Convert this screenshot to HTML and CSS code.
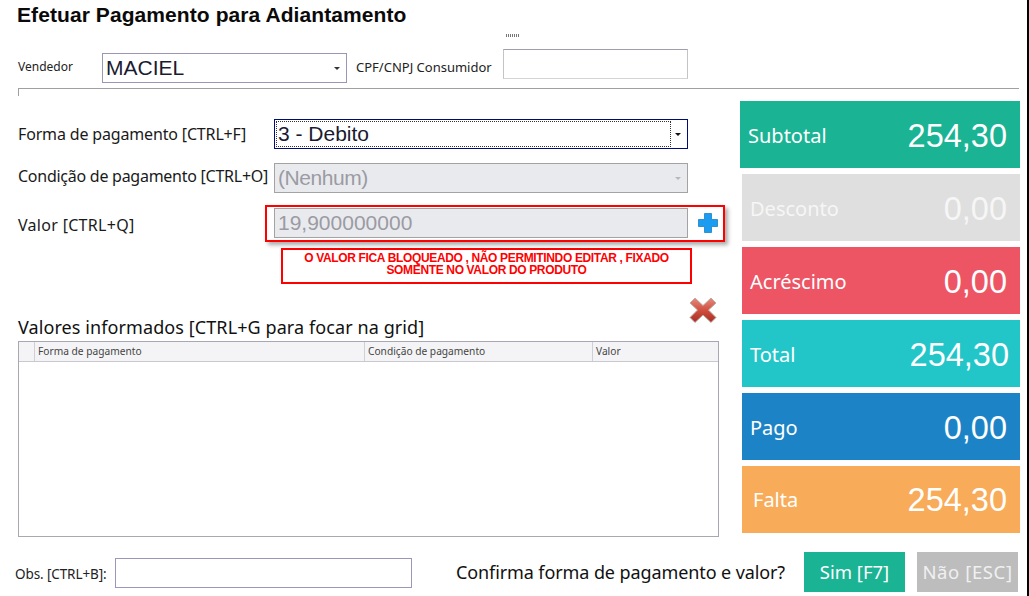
FILE: index.html
```html
<!DOCTYPE html>
<html lang="pt-BR">
<head>
<meta charset="utf-8">
<title>Efetuar Pagamento para Adiantamento</title>
<link rel="stylesheet" href="styles.css">
</head>
<body>
<div class="window">
  <h1 class="title">Efetuar Pagamento para Adiantamento</h1>
  <div class="dots"></div>
  <div class="top-row">
    <span class="small-label vendor-label">Vendedor</span>
    <div class="field vendor"><span class="value-lg">MACIEL</span><span class="caret"></span></div>
    <span class="small-label cpf-label">CPF/CNPJ Consumidor</span>
    <div class="field cpf"></div>
  </div>
  <div class="group-line"></div>
  <div class="main">
    <div class="left">
      <div class="form-row row-forma">
        <span class="label">Forma de pagamento [CTRL+F]</span>
        <div class="field wide focused"><span class="focus-box"><span class="value-lg">3 - Debito</span></span><span class="caret dark"></span></div>
      </div>
      <div class="form-row row-cond">
        <span class="label">Condição de pagamento [CTRL+O]</span>
        <div class="field wide disabled"><span class="value-lg">(Nenhum)</span><span class="caret light"></span></div>
      </div>
      <div class="form-row row-valor">
        <span class="label">Valor [CTRL+Q]</span>
        <div class="highlight">
          <div class="field wide disabled"><span class="value-lg">19,900000000</span></div>
          <svg class="plus" viewBox="0 0 22 22" aria-hidden="true"><path d="M7.500 1.500h7v6h6v7h-6v6h-7v-6h-6v-7h6z" fill="#1c9cf0" stroke="#1481c8" stroke-width=".8" stroke-linejoin="round"/></svg>
        </div>
      </div>
      <div class="note">O VALOR FICA BLOQUEADO , NÃO PERMITINDO EDITAR , FIXADO<br>SOMENTE NO VALOR DO PRODUTO</div>
      <div class="x-row">
        <svg class="remove" viewBox="0 0 28 26" aria-hidden="true"><defs><linearGradient id="xg" x1="0" y1="0" x2="0" y2="1"><stop offset="0" stop-color="#e88a7c"/><stop offset=".5" stop-color="#d0503f"/><stop offset="1" stop-color="#a92c22"/></linearGradient></defs><path d="M6 1l8 7.500L22 1l5 5-7.500 7L27 20.500l-5 5-8-7.500-8 7.500-5-5L8.500 13 1 6z" fill="url(#xg)" stroke="#b5aeaa" stroke-width="1" stroke-linejoin="round"/></svg>
      </div>
      <div class="grid-title">Valores informados [CTRL+G para focar na grid]</div>
      <div class="grid">
        <div class="grid-head">
          <span class="col col-0"></span>
          <span class="col col-1">Forma de pagamento</span>
          <span class="col col-2">Condição de pagamento</span>
          <span class="col col-3">Valor</span>
        </div>
      </div>
    </div>
    <div class="cards">
      <div class="card teal first"><span class="card-label">Subtotal</span><span class="card-value">254,30</span></div>
      <div class="card grey"><span class="card-label">Desconto</span><span class="card-value">0,00</span></div>
      <div class="card red"><span class="card-label">Acréscimo</span><span class="card-value">0,00</span></div>
      <div class="card cyan"><span class="card-label">Total</span><span class="card-value">254,30</span></div>
      <div class="card blue"><span class="card-label">Pago</span><span class="card-value">0,00</span></div>
      <div class="card orange"><span class="card-label">Falta</span><span class="card-value">254,30</span></div>
    </div>
  </div>
  <div class="footer">
    <span class="obs-label">Obs. [CTRL+B]:</span>
    <div class="field obs"></div>
    <span class="confirm">Confirma forma de pagamento e valor?</span>
    <button class="btn yes" type="button">Sim [F7]</button>
    <button class="btn no" type="button">Não [ESC]</button>
  </div>
</div>
</body>
</html>
```

FILE: styles.css
```css
* { box-sizing: border-box; }
html, body { margin: 0; padding: 0; height: 100%; background: #fff; }
body { overflow: hidden; }
.window {
  width: 1029px;
  height: 596px;
  border-right: 2px solid #000;
  background: #fff;
  font-family: "Open Sans", "Noto Sans", sans-serif;
  color: #111;
  overflow: hidden;
}
.title {
  margin: 0;
  padding: 4px 0 0 17px;
  height: 29px;
  font: bold 21px/21px "Liberation Sans", sans-serif;
  color: #0a0a0a;
  white-space: nowrap;
  letter-spacing: .08px;
}
.dots {
  width: 14px;
  height: 3px;
  margin: 5px 0 0 506px;
  background: repeating-linear-gradient(90deg, #777 0 1px, #fff 1px 2px);
}
.top-row { display: flex; align-items: flex-start; height: 39px; margin-top: 12px; padding-left: 18px; }
.small-label { font: 12px/14px "Noto Sans", sans-serif; color: #222; }
.vendor-label { width: 84px; margin-top: 11px; }
.cpf-label { width: 147px; margin: 11px 0 0 9px; white-space: nowrap; font-size: 13px; }
.field {
  position: relative;
  display: flex;
  align-items: center;
  height: 30px;
  padding-left: 3px;
  background: #fff;
  border: 1px solid #9c97b8;
}
.vendor { width: 245px; margin-top: 4px; }
.cpf { width: 185px; border-color: #c4c4c8; border-top-color: #a09eaa; border-bottom-color: #d4d4d4; }
.value-lg { font: 21px/24px "Liberation Sans", sans-serif; color: #1a1a30; }
.caret {
  position: absolute;
  right: 6px;
  top: 13px;
  width: 0;
  height: 0;
  border: 3px solid transparent;
  border-top: 3px solid #333;
  border-bottom: 0;
}
.caret.dark { border-top-color: #111; }
.caret.light { border-top-color: #b8b8b8; }
.group-line {
  height: 8px;
  margin: 0 8px 0 18px;
  border-top: 1px solid #a0a0a0;
  border-left: 1px solid #a0a0a0;
}
.main { display: flex; }
.left { width: 740px; flex: none; padding-left: 18px; }
.form-row { display: flex; align-items: center; height: 30px; }
.row-forma { margin-top: 23px; }
.row-cond { margin-top: 14px; }
.row-valor { margin-top: 15px; }
.label { width: 256px; flex: none; font: 16px/20px "Noto Sans", sans-serif; color: #1a1a1a; white-space: nowrap; letter-spacing: -.16px; }
.row-cond .label { letter-spacing: -.26px; padding-bottom: 4px; }
.row-valor .label { letter-spacing: .3px; padding-top: 4px; }
.row-cond .value-lg { letter-spacing: -.45px; }
.wide { width: 414px; flex: none; }
.focused { border-color: #000a78; padding-left: 1px; }
.focus-box { display: flex; align-items: center; width: 395px; height: 26px; padding-left: 1px; border: 1px dotted #333; }
.disabled { background: #e9eaee; border-color: #a3a3a3; }
.disabled .value-lg { color: #9b9ba3; }
.highlight {
  display: flex;
  align-items: center;
  width: 460px;
  height: 37px;
  margin-left: -9px;
  padding-left: 7px;
  border: 2px solid #f00;
  box-shadow: 3px 3px 4px rgba(70, 70, 70, .45);
  background: #fff;
  flex: none;
}
.plus { width: 22px; height: 22px; margin-left: 9px; flex: none; }
.note {
  width: 411px;
  height: 36px;
  margin: 10px 0 0 263px;
  padding-top: 2px;
  border: 2px solid #f00;
  color: #f00;
  text-align: center;
  font: bold 12px/12px "Liberation Sans", sans-serif;
  letter-spacing: -.35px;
}
.x-row { display: flex; justify-content: flex-end; height: 26px; margin-top: 13px; padding-right: 23px; }
.remove { width: 28px; height: 26px; }
.grid-title { margin-top: -7px; margin-bottom: 2px; height: 23px; font: 18px/23px "Noto Sans", sans-serif; color: #111; white-space: nowrap; letter-spacing: .09px; }
.grid { width: 701px; height: 196px; border: 1px solid #a8a8b4; background: #fff; }
.grid-head { display: flex; height: 20px; background: #f4f4f6; border-bottom: 1px solid #c8c8d0; }
.col { height: 19px; padding-left: 3px; font: 10.2px/19px "Noto Sans", sans-serif; color: #444; border-right: 1px solid #cfcfd6; white-space: nowrap; }
.col-0 { width: 16px; padding: 0; }
.col-1 { width: 330px; }
.col-2 { width: 228px; }
.col-3 { flex: 1; border-right: 0; }
.cards { display: flex; flex-direction: column; gap: 6px; width: 280px; margin-top: 5px; }
.card {
  display: flex;
  align-items: center;
  justify-content: space-between;
  height: 67px;
  margin-left: 2px;
  padding: 0 13px 0 8px;
  color: #fff;
  width: 278px;
}
.card.first { margin-left: 0; width: 280px; }
.cyan { padding-right: 11px; }
.card-label { font: 20px/24px "Noto Sans", sans-serif; padding-top: 2px; }
.card-value { font: 32.5px/38px "Liberation Sans", sans-serif; padding-top: 2px; }
.orange .card-label { margin-left: 3px; padding-top: 0; }
.orange .card-value { padding-top: 0; }
.teal { background: #1ab394; }
.grey { background: #dfdfdf; color: #f6f6f6; }
.red { background: #ed5565; }
.cyan { background: #23c6c8; }
.blue { background: #1c84c6; }
.orange { background: #f8ac59; }
.footer { display: flex; align-items: center; height: 40px; margin-top: 15px; padding-left: 15px; }
.obs-label { width: 100px; flex: none; font: 13.5px/14px "Noto Sans", sans-serif; color: #222; margin-top: 4px; white-space: nowrap; letter-spacing: -.1px; }
.obs { width: 297px; flex: none; margin-top: 2px; }
.confirm { width: 348px; flex: none; margin-left: 44px; font: 18px/20px "Noto Sans", sans-serif; color: #111; white-space: nowrap; margin-top: -1px; letter-spacing: -.1px; }
.btn { width: 101px; height: 40px; padding: 0; border: 0; font: 18.5px/20px "Noto Sans", sans-serif; color: #fff; flex: none; white-space: nowrap; }
.yes { background: #1ab394; }
.no { margin-left: 12px; background: #bdbdbd; color: #f0f0f0; letter-spacing: .6px; }
```
